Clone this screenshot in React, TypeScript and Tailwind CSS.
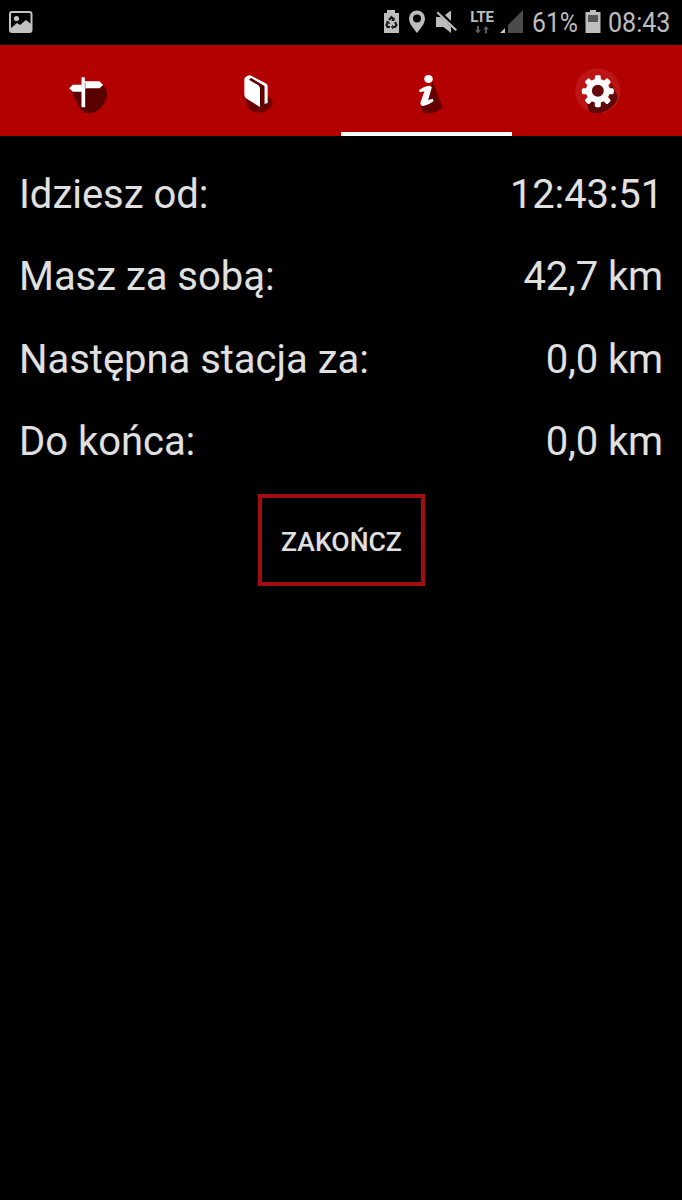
import type { ReactNode } from 'react';

const stats = [
  { label: 'Idziesz od:', value: '12:43:51' },
  { label: 'Masz za sobą:', value: '42,7 km' },
  { label: 'Następna stacja za:', value: '0,0 km' },
  { label: 'Do końca:', value: '0,0 km' },
];

function StatusBar() {
  return (
    <header className="flex h-[45px] shrink-0 items-start justify-between pl-[9px] pr-[11px] text-[#bdbdbd]">
      <svg className="mt-[11px] h-[22px] w-6" viewBox="0 0 24 22" fill="none" stroke="#c2c2c2">
        <rect x="1" y="1" width="21.5" height="20" rx="2" strokeWidth="2" />
        <circle cx="7.5" cy="7.5" r="2.6" fill="#c2c2c2" stroke="none" />
        <path d="M2 17L8 12L11 14L17 9L22 13V21H2Z" fill="#c2c2c2" stroke="none" />
      </svg>
      <div className="flex">
        <svg className="mt-[10px] h-6 w-[17px]" viewBox="0 0 17 24" fill="#bdbdbd">
          <path d="M4 0H12V3H16V23H1V3H4Z" />
          <g fill="none" stroke="#111" strokeWidth="2">
            <path d="M6 10L8.5 7L11 10M12 12L13.5 15L12 17H9.5M7 17H4.5L3.5 15L5 12" />
            <path d="M10 15L8.5 17L10 19M11 7.5V10.5H8.5M3 12L5.5 11.5L6.5 14" strokeWidth="1" />
          </g>
        </svg>
        <svg className="ml-[8px] mt-[10px] h-6 w-[18px]" viewBox="0 0 18 24" fill="#bdbdbd">
          <path fillRule="evenodd" d="M9 0.5A8 8 0 0 0 1 8.5C1 14 6 19 9 23C12 19 17 14 17 8.5A8 8 0 0 0 9 .5ZM9 4.5A4 4 0 1 1 9 12.5A4 4 0 0 1 9 4.5Z" />
        </svg>
        <svg className="ml-[10px] mr-[-1px] mt-[10px] h-6 w-[22px]" viewBox="0 0 22 24" fill="#bdbdbd">
          <path d="M0 7H5L15 17V23L7.5 17H0ZM9 5L15 .5V11ZM2 1.5L.5 3L19.5 21L21 19.5Z" />
        </svg>
        <div className="ml-[13px] mt-[10px] flex w-[24px] flex-col items-center">
          <span className="h-[14px] font-['Roboto',sans-serif] text-[15px] font-bold leading-[14px] tracking-[-0.2px]">LTE</span>
          <svg className="mt-[2px] h-[8px] w-[14px]" viewBox="0 0 14 8" fill="#5d5d5d">
            <path d="M2 0H4V4H6L3 7.5L0 4H2ZM10 7.5H12V3.5H14L11 0L8 3.5H10Z" />
          </svg>
        </div>
        <svg className="ml-[6px] mt-[10px] h-6 w-6" viewBox="0 0 24 24">
          <path d="M0 23L5 18V23Z" fill="#c5c5c5" />
          <path d="M8 23V15L23 0V23Z" fill="#4b4b4b" />
        </svg>
        <span className="ml-[8px] mt-[6px] w-[46px] origin-left scale-x-[.87] whitespace-nowrap font-['Roboto',sans-serif] text-[28.5px] leading-[33px]">61%</span>
        <svg className="ml-[7px] mt-[10px] h-6 w-4" viewBox="0 0 16 24">
          <path d="M5 0H11V2H15.5V23H.5V2H5Z" fill="#bdbdbd" />
          <path d="M3 5H13V12H3Z" fill="#555" />
        </svg>
        <span className="ml-[7px] mt-[6px] w-[63px] origin-left scale-x-[.88] whitespace-nowrap font-['Roboto',sans-serif] text-[28.5px] leading-[33px]">08:43</span>
      </div>
    </header>
  );
}

function Tab({ label, active = false, children }: { label: string; active?: boolean; children: ReactNode }) {
  return (
    <button aria-label={label} className={`flex min-w-0 flex-1 items-center justify-center border-b-4 ${active ? 'border-white' : 'border-transparent'}`}>
      {children}
    </button>
  );
}

function Tabs() {
  return (
    <nav className="flex h-[91px] shrink-0 bg-[#b30000]">
      <Tab label="Trasa">
        <svg className="h-[87px] w-[170px]" viewBox="0 45 170 87">
          <g transform="translate(50.5 60.3) scale(.33333)">
            <path d="M60 86L91 149Q112 169 145 148Q176 121 168 89L157 72L104 86Z" fill="#590000" />
            <path d="M93 51H103V63H147L158 74L147 84H104V141H93V94H67L56 84L67 73H93Z" fill="#fff" />
            <path d="M104 67V83" stroke="#c58181" strokeWidth="3" />
          </g>
        </svg>
      </Tab>
      <Tab label="Książka">
        <svg className="h-[87px] w-[170px]" viewBox="170.5 45 170 87">
          <g transform="translate(219.5 60) scale(.33333)">
            <path d="M76 115L84 145Q107 167 139 153Q158 141 158 124L143 104L118 141Z" fill="#6a0000" />
            <path d="M73 57Q74 49 91 46L137 70Q144 74 143 80V129L133 132V79L93 55L87 59L116 76Q120 79 120 85V141L77 114Q73 111 73 103Z" fill="#fff" />
            <path d="M88 59L93 54L133 78V132L120 140V82L115 75Z" fill="#520000" />
            <path d="M105 64L125 76L127 132" fill="none" stroke="#790000" strokeWidth="3" />
          </g>
        </svg>
      </Tab>
      <Tab label="Informacje" active>
        <svg className="h-[87px] w-[170px]" viewBox="341 45 170 87">
          <g transform="translate(389.5 60) scale(.33333)">
            <path d="M94 135L100 158Q133 165 160 143L129 64L124 87Z" fill="#650000" />
            <ellipse cx="117" cy="57" rx="13" ry="12" fill="#fff" />
            <path d="M88 91Q101 79 121 77L127 82L116 120L130 116L132 124Q120 134 102 138Q91 138 93 127L105 94L91 97Z" fill="#fff" />
          </g>
        </svg>
      </Tab>
      <Tab label="Ustawienia">
        <svg className="h-[87px] w-[170px]" viewBox="511.5 45 170 87">
          <g transform="translate(558 50.2) scale(.33333)">
            <circle cx="118" cy="122" r="68" fill="#bd1416" />
            <path d="M84 153L92 185Q127 198 158 172Q177 155 177 139L158 96L151 151Z" fill="#5f080b" />
            <circle cx="118" cy="122" r="27" fill="#650b0e" stroke="#fff" strokeWidth="18" />
            <g fill="#fff">
              <rect x="109" y="75" width="18" height="20" rx="5" />
              <rect x="109" y="75" width="18" height="20" rx="5" transform="rotate(45 118 123)" />
              <rect x="109" y="75" width="18" height="20" rx="5" transform="rotate(90 118 123)" />
              <rect x="109" y="75" width="18" height="20" rx="5" transform="rotate(135 118 123)" />
              <rect x="109" y="75" width="18" height="20" rx="5" transform="rotate(180 118 123)" />
              <rect x="109" y="75" width="18" height="20" rx="5" transform="rotate(225 118 123)" />
              <rect x="109" y="75" width="18" height="20" rx="5" transform="rotate(270 118 123)" />
              <rect x="109" y="75" width="18" height="20" rx="5" transform="rotate(315 118 123)" />
            </g>
          </g>
        </svg>
      </Tab>
    </nav>
  );
}

export default function App() {
  return (
    <div className="flex h-[1200px] w-[682px] flex-col overflow-hidden bg-black font-['Roboto',sans-serif] text-[#e0e0e0]">
      <StatusBar />
      <Tabs />
      <main className="flex flex-col items-center pt-[17px]">
        <dl className="w-full pl-[19px] pr-[19px]">
          {stats.map(({ label, value }) => (
            <div key={label} className="flex h-[82.5px] items-center justify-between text-[40px] leading-[47px]">
              <dt className="tracking-[-0.03px]">{label}</dt>
              <dd className="tracking-[-0.15px]">{value}</dd>
            </div>
          ))}
        </dl>
        <button className="ml-[1px] mt-[11px] flex h-[92px] w-[167px] items-center justify-center border-4 border-[#a00e10] pt-[3px] text-[26.6px] font-medium leading-[31px]">
          ZAKOŃCZ
        </button>
      </main>
    </div>
  );
}
